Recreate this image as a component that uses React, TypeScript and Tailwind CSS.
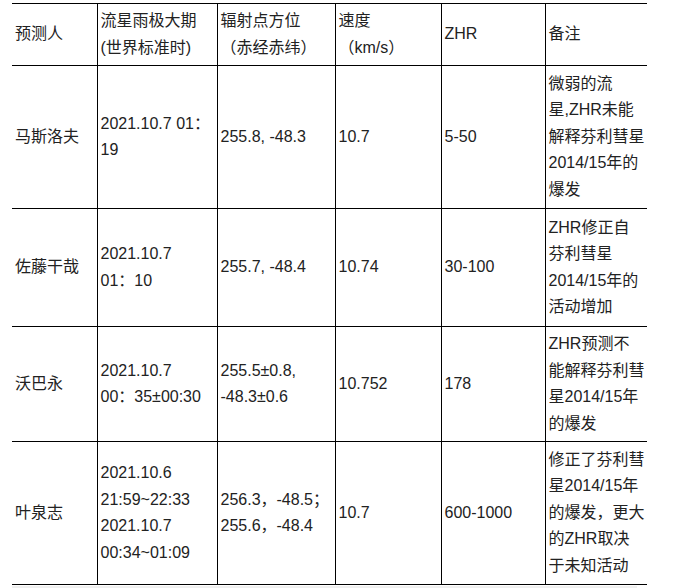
const cols = ["w-[85px]", "w-[120px]", "w-[118px]", "w-[106px]", "w-[104px]", "w-[102px]"]

const header = [
  ["预测人"],
  ["流星雨极大期", "(世界标准时)"],
  ["辐射点方位", "（赤经赤纬）"],
  ["速度", "（km/s）"],
  ["ZHR"],
  ["备注"],
]

const rows = [
  {
    h: "h-[143px]",
    cells: [
      ["马斯洛夫"],
      ["2021.10.7 01：", "19"],
      ["255.8, -48.3"],
      ["10.7"],
      ["5-50"],
      ["微弱的流", "星,ZHR未能", "解释芬利彗星", "2014/15年的", "爆发"],
    ],
  },
  {
    h: "h-[118px]",
    cells: [
      ["佐藤干哉"],
      ["2021.10.7", "01：10"],
      ["255.7, -48.4"],
      ["10.74"],
      ["30-100"],
      ["ZHR修正自", "芬利彗星", "2014/15年的", "活动增加"],
    ],
  },
  {
    h: "h-[115px]",
    cells: [
      ["沃巴永"],
      ["2021.10.7", "00：35±00:30"],
      ["255.5±0.8,", "-48.3±0.6"],
      ["10.752"],
      ["178"],
      ["ZHR预测不", "能解释芬利彗", "星2014/15年", "的爆发"],
    ],
  },
  {
    h: "h-[143px]",
    cells: [
      ["叶泉志"],
      ["2021.10.6", "21:59~22:33", "2021.10.7", "00:34~01:09"],
      ["256.3，-48.5；", "255.6，-48.4"],
      ["10.7"],
      ["600-1000"],
      ["修正了芬利彗", "星2014/15年", "的爆发，更大", "的ZHR取决", "于未知活动"],
    ],
  },
]

function Cell({ lines, first }: { lines: string[]; first: boolean }) {
  return (
    <td
      className={`border-y border-black px-[3px] align-middle whitespace-nowrap ${
        first ? "" : "border-l"
      }`}
    >
      {lines.map((l, i) => (
        <div key={i}>{l}</div>
      ))}
    </td>
  )
}

export default function App() {
  return (
    <div className="bg-white w-[685px] h-[588px] pl-[12px] pt-[3px] text-[16px] leading-[26.5px] text-[#222] font-['Liberation_Sans','Noto_Sans_CJK_SC',sans-serif]">
      <table className="table-fixed border-collapse w-[635px]">
        <colgroup>
          {cols.map((w, i) => (
            <col key={i} className={w} />
          ))}
        </colgroup>
        <tbody>
          <tr className="h-[62px]">
            {header.map((lines, i) => (
              <Cell key={i} lines={lines} first={i === 0} />
            ))}
          </tr>
          {rows.map((r, ri) => (
            <tr key={ri} className={r.h}>
              {r.cells.map((lines, i) => (
                <Cell key={i} lines={lines} first={i === 0} />
              ))}
            </tr>
          ))}
        </tbody>
      </table>
      <div className="mt-[1px] h-[3px] w-[625px] bg-[#f0f0f0]" />
    </div>
  )
}
